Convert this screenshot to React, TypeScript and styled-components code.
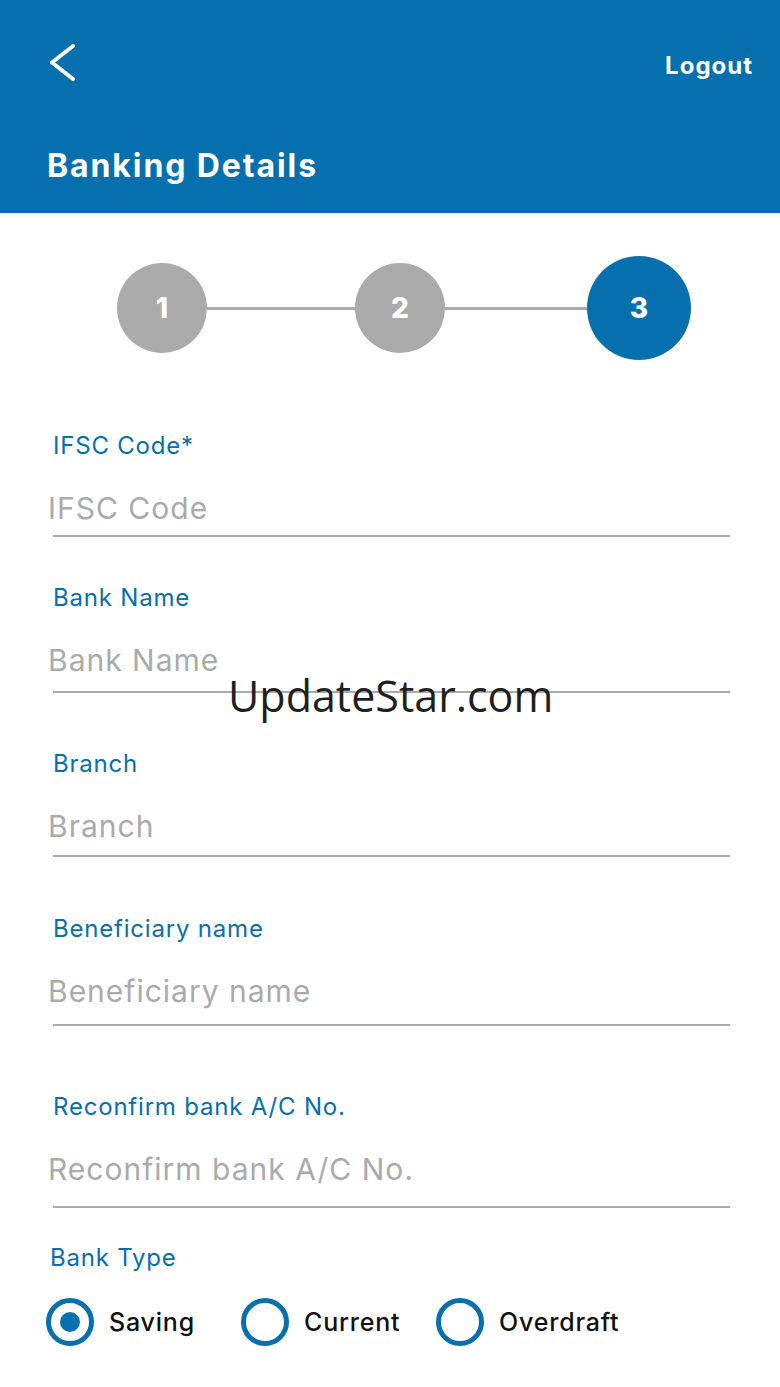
import styled, { createGlobalStyle } from "styled-components";

const $blue = "#0670ae";
const $grey = "#aaaaaa";

const GlobalStyle = createGlobalStyle`
  body {
    margin: 0;
    background: #ffffff;
    font-family: Inter, "Open Sans", sans-serif;
  }
  * {
    box-sizing: border-box;
  }
`;

const Page = styled.div`
  position: relative;
  width: 780px;
  min-height: 1387px;
  background: #ffffff;
`;

const Header = styled.header`
  height: 213px;
  background: ${$blue};
  display: flex;
  flex-direction: column;
  padding: 0 27px 0 47px;
  color: #ffffff;
`;

const TopRow = styled.div`
  height: 130px;
  display: flex;
  align-items: center;
  justify-content: space-between;
`;

const BackButton = styled.button`
  border: none;
  background: none;
  padding: 0;
  width: 30px;
  height: 40px;
  margin-top: -2px;
  cursor: pointer;
`;

const LogoutText = styled.span`
  font-size: 24px;
  font-weight: 700;
  letter-spacing: 1px;
`;

const Title = styled.h1`
  margin: 0;
  height: 72px;
  line-height: 72px;
  font-size: 32px;
  font-weight: 700;
  letter-spacing: 1.9px;
`;

const Stepper = styled.div`
  display: flex;
  align-items: center;
  margin: 43px 0 0 117px;
`;

const StepCircle = styled.div<{ $active?: boolean }>`
  flex: none;
  width: ${(p) => (p.$active ? 104 : 90)}px;
  height: ${(p) => (p.$active ? 104 : 90)}px;
  border-radius: 50%;
  background: ${(p) => (p.$active ? $blue : $grey)};
  color: #ffffff;
  display: flex;
  align-items: center;
  justify-content: center;
  font-size: 28px;
  font-weight: 800;
`;

const Connector = styled.div<{ $width: number }>`
  flex: none;
  width: ${(p) => p.$width}px;
  height: 3px;
  background: ${$grey};
`;

const Form = styled.form`
  padding: 0 50px 0 53px;
  margin-top: 68px;
`;

const Field = styled.div<{ $top: number; $pad: number }>`
  margin-top: ${(p) => p.$top}px;
  padding-bottom: ${(p) => p.$pad}px;
  border-bottom: 2px solid ${$grey};
`;

const Label = styled.label`
  display: block;
  height: 36px;
  line-height: 36px;
  font-size: 24px;
  letter-spacing: 0.8px;
  color: ${$blue};
`;

const Input = styled.input`
  display: block;
  width: 100%;
  margin: 24px 0 0 -5px;
  height: 40px;
  border: none;
  outline: none;
  padding: 0;
  background: transparent;
  font-family: inherit;
  font-size: 30px;
  letter-spacing: 1px;
  color: #333333;

  &::placeholder {
    color: ${$grey};
  }
`;

const TypeLabel = styled(Label)`
  margin: 32px 0 0 -3px;
`;

const RadioRow = styled.div`
  display: flex;
  margin: 22px 0 0 -7px;
`;

const RadioOption = styled.label`
  width: 195px;
  display: flex;
  align-items: center;
  gap: 15px;
  font-size: 25px;
  font-weight: 500;
  letter-spacing: 0.8px;
  color: #111111;
  cursor: pointer;
`;

const RadioRing = styled.span<{ $checked?: boolean }>`
  flex: none;
  width: 48px;
  height: 48px;
  border-radius: 50%;
  border: 5px solid ${$blue};
  display: flex;
  align-items: center;
  justify-content: center;

  &::after {
    content: "";
    width: 20px;
    height: 20px;
    border-radius: 50%;
    background: ${(p) => (p.$checked ? $blue : "transparent")};
  }
`;

const Watermark = styled.div`
  position: absolute;
  left: 228px;
  top: 674px;
  font-family: "Open Sans", sans-serif;
  font-size: 43px;
  line-height: 1;
  color: #1f1f1f;
  pointer-events: none;
`;

const fields = [
  { label: "IFSC Code*", placeholder: "IFSC Code", top: 0, pad: 7 },
  { label: "Bank Name", placeholder: "Bank Name", top: 43, pad: 11 },
  { label: "Branch", placeholder: "Branch", top: 53, pad: 9 },
  { label: "Beneficiary name", placeholder: "Beneficiary name", top: 54, pad: 13 },
  {
    label: "Reconfirm bank A/C No.",
    placeholder: "Reconfirm bank A/C No.",
    top: 63,
    pad: 17,
  },
];

const bankTypes = ["Saving", "Current", "Overdraft"];

const App = () => {
  return (
    <Page>
      <GlobalStyle />
      <Header>
        <TopRow>
          <BackButton aria-label="Back">
            <svg width="30" height="40" viewBox="0 0 30 40">
              <path
                d="M26 2 L5 18.5 L26 35"
                fill="none"
                stroke="#ffffff"
                strokeWidth="4"
                strokeLinecap="round"
                strokeLinejoin="round"
              />
            </svg>
          </BackButton>
          <LogoutText>Logout</LogoutText>
        </TopRow>
        <Title>Banking Details</Title>
      </Header>

      <Stepper>
        <StepCircle>1</StepCircle>
        <Connector $width={148} />
        <StepCircle>2</StepCircle>
        <Connector $width={142} />
        <StepCircle $active>3</StepCircle>
      </Stepper>

      <Form onSubmit={(e) => e.preventDefault()}>
        {fields.map((f) => (
          <Field key={f.label} $top={f.top} $pad={f.pad}>
            <Label>{f.label}</Label>
            <Input placeholder={f.placeholder} />
          </Field>
        ))}
        <TypeLabel>Bank Type</TypeLabel>
        <RadioRow>
          {bankTypes.map((t, i) => (
            <RadioOption key={t}>
              <RadioRing $checked={i === 0} />
              {t}
            </RadioOption>
          ))}
        </RadioRow>
      </Form>

      <Watermark>UpdateStar.com</Watermark>
    </Page>
  );
};

export default App;
